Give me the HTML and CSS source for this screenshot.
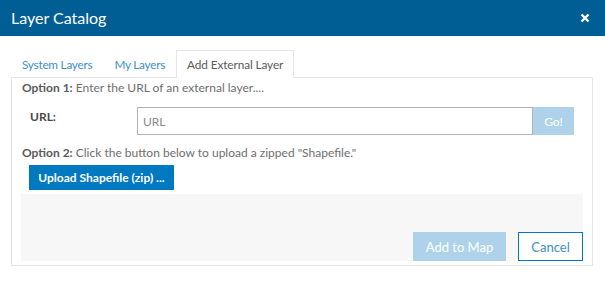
FILE: index.html
```html
<!DOCTYPE html>
<html>
<head>
<meta charset="utf-8">
<link rel="stylesheet" href="styles.css">
</head>
<body>
<div class="dialog">
  <div class="titlebar">
    <span class="title">Layer Catalog</span>
    <span class="close" aria-label="close">
      <svg width="10" height="10" viewBox="0 0 10 10"><path d="M1.5 1.5 L8.5 8.5 M8.5 1.5 L1.5 8.5" stroke="#fff" stroke-width="2.4" stroke-linecap="butt"/></svg>
    </span>
  </div>
  <div class="content">
    <div class="tabs">
      <div class="tab">System Layers</div>
      <div class="tab">My Layers</div>
      <div class="tab active">Add External Layer</div>
    </div>
    <div class="panel">
      <div class="opt"><b>Option 1:</b> Enter the URL of an external layer....</div>
      <div class="url-row">
        <label class="url-label">URL:</label>
        <div class="input-group">
          <input class="url-input" type="text" placeholder="URL">
          <button class="go">Go!</button>
        </div>
      </div>
      <div class="opt opt2"><b>Option 2:</b> Click the button below to upload a zipped "Shapefile."</div>
      <div class="upload-row">
        <button class="upload">Upload Shapefile (zip) ...</button>
      </div>
      <div class="footer">
        <button class="add">Add to Map</button>
        <button class="cancel">Cancel</button>
      </div>
    </div>
  </div>
</div>
</body>
</html>
```
FILE: styles.css
```css
* { box-sizing: border-box; }
html, body { margin: 0; padding: 0; background: #fff; }
body { font-family: Lato, "Noto Sans", sans-serif; color: #6e6e6e; }
.dialog { width: 605px; }
.titlebar {
  height: 36px;
  background: #005e95;
  display: flex;
  align-items: center;
  justify-content: space-between;
  padding: 0 15px 0 11px;
}
.title { color: #fff; font-size: 16px; line-height: 20px; }
.close { display: flex; width: 10px; height: 10px; }
.content { padding: 14px 12px 0 11px; }
.tabs { display: flex; height: 28px; position: relative; z-index: 1; }
.tab {
  font-size: 11.8px;
  letter-spacing: -0.25px;
  line-height: 27px;
  color: #3d8fc6;
  padding: 0 10px;
  border: 1px solid transparent;
  border-bottom: none;
  height: 28px;
}
.tab.active {
  color: #595959;
  background: #fff;
  border-color: #e6e6e6;
  letter-spacing: -0.1px;
}
.panel {
  border: 1px solid #e6e6e6;
  margin-top: -1px;
  padding: 0 9px 4px 9px;
}
.opt { font-size: 12px; line-height: 20px; padding-left: 1px; }
.opt b { font-weight: 700; color: #5a5a5a; }
.url-row { display: flex; margin-top: 9px; padding-left: 9px; height: 28px; }
.url-label { width: 107px; font-size: 12px; font-weight: 700; color: #4a4a4a; padding-top: 2px; }
.input-group { display: flex; }
.url-input {
  width: 396px;
  height: 28px;
  border: 1px solid #b3b3b3;
  font-family: inherit;
  font-size: 12px;
  color: #595959;
  padding: 0 5px;
  outline: none;
}
.url-input::placeholder { color: #8a8a8a; }
.go {
  width: 41px;
  height: 28px;
  border: none;
  background: #aed2e9;
  color: #fff;
  font-family: inherit;
  font-size: 12px;
  padding: 0;
}
.opt2 { margin-top: 8px; }
.upload-row { margin-top: 2px; padding-left: 8px; }
.upload {
  height: 25px;
  width: 145px;
  border: none;
  background: #0079c1;
  color: #fff;
  font-family: inherit;
  font-weight: 700;
  font-size: 12px;
  padding: 0;
}
.footer {
  margin-top: 4px;
  height: 67px;
  background: #f7f7f7;
  display: flex;
  justify-content: flex-end;
  align-items: flex-end;
  gap: 12px;
}
.add, .cancel {
  height: 29px;
  font-family: inherit;
  font-size: 13px;
  padding: 0;
}
.add { width: 93px; border: none; background: #aed2e9; color: #fff; }
.cancel { width: 65px; border: 1px solid #0079c1; background: #fff; color: #3d8fc6; }
```
